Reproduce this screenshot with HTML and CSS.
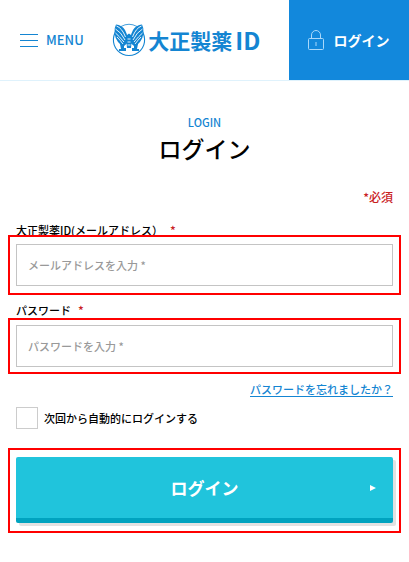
FILE: index.html
```html
<!DOCTYPE html>
<html lang="ja">
<head>
    <meta charset="UTF-8">
    <meta name="viewport" content="width=device-width, initial-scale=1">
    <title>ログイン</title>
    <link rel="stylesheet" href="styles.css">
</head>
<body>
    <header class="header">
        <button type="button" class="menu">
            <span class="menu-icon"></span>
            MENU
        </button>
        <a href="#" class="logo">
            <svg class="logo-mark" viewBox="0 0 34 34" fill="none" stroke="#1485d2" aria-hidden="true">
                <path d="M7 5A15.6 15.6 0 1 0 27 5" stroke-width="1.1"/>
                <path d="M9 3.5Q17 -1 25 3.5" stroke-width=".8"/>
                <g fill="#1485d2" stroke="none">
                    <path d="M4 1.5Q10 2 13 7Q15.500 11 15.500 16V20L12 23Q8 22 6 19Q3 15 2.500 10Q2 5 4 1.500Z"/>
                    <path d="M30 1.500Q24 2 21 7Q18.500 11 18.500 16V20L22 23Q26 22 28 19Q31 15 31.500 10Q32 5 30 1.500Z"/>
                    <path d="M15 12L17 10.500L19 12V16Q20 20 19 25H15Q14 20 15 16Z"/>
                    <path d="M8 21L12 20V25H14V28H7V26H9ZM26 21L22 20V25H20V28H27V26H25Z"/>
                </g>
                <path d="M4.500 3Q10 5 13.500 14M3.500 6Q9 9 13 17M3.500 10Q7 13 12 19M5 14Q8 17 11 21M29.500 3Q24 5 20.500 14M30.500 6Q25 9 21 17M30.500 10Q27 13 22 19M29 14Q26 17 23 21M15.500 16H18.500M15.500 19H18.500M15.500 22H18.500" stroke="#fff" stroke-width=".9"/>
            </svg>
            <span class="logo-text">大正製薬<span class="logo-id">ID</span></span>
        </a>
        <a href="#" class="header-login">
            <svg class="lock" viewBox="0 0 16 20" fill="none" stroke="#a9d8fa" aria-hidden="true">
                <rect x=".5" y="8.5" width="15" height="11" rx="1"/>
                <path d="M3.500 8.500V5a4.500 4.500 0 0 1 9 0v3.500M8 12v4"/>
            </svg>
            ログイン
        </a>
    </header>

    <main class="main">
        <p class="sub-title">LOGIN</p>
        <h1 class="title">ログイン</h1>
        <p class="required-note">*必須</p>

        <form class="form">
            <label class="label" for="email">大正製薬ID(メールアドレス）<span class="required">*</span></label>
            <div class="frame frame-email">
                <input class="input" type="email" id="email" placeholder="メールアドレスを入力 *">
            </div>

            <label class="label label-password" for="password">パスワード<span class="required">*</span></label>
            <div class="frame frame-password">
                <input class="input" type="password" id="password" placeholder="パスワードを入力 *">
            </div>

            <a href="#" class="forgot">パスワードを忘れましたか？</a>

            <div class="remember">
                <input class="checkbox" type="checkbox" id="remember">
                <label for="remember">次回から自動的にログインする</label>
            </div>

            <div class="frame frame-submit">
                <button type="submit" class="submit">ログイン</button>
            </div>
        </form>
    </main>
</body>
</html>
```

FILE: styles.css
```css
* {
    box-sizing: border-box;
}

body {
    margin: 0;
    background: #fff;
    color: #111;
    font-family: "Noto Sans CJK JP", sans-serif;
    font-size: 11px;
    font-weight: 500;
    line-height: 16px;
}

p,
h1 {
    margin: 0;
}

button,
input {
    font: inherit;
}

/* header */
.header {
    display: flex;
    align-items: center;
    justify-content: space-between;
    border-bottom: 1px solid #dff2fc;
}

.menu {
    display: flex;
    align-items: center;
    gap: 8px;
    padding: 0 0 0 20px;
    border: 0;
    background: none;
    color: #1485d2;
    font-size: 13px;
}

.menu-icon {
    width: 18px;
    height: 13px;
    border-top: 1px solid #1485d2;
    border-bottom: 1px solid #1485d2;
    background: linear-gradient(#1485d2, #1485d2) center / 100% 1px no-repeat;
}

.logo {
    display: flex;
    align-items: center;
    gap: 2px;
    color: #1485d2;
    text-decoration: none;
}

.logo-mark {
    width: 34px;
    height: 34px;
}

.logo-text {
    display: flex;
    align-items: center;
    gap: 3px;
    font-size: 21px;
    font-weight: 700;
    line-height: 30px;
}

.logo-id {
    font-size: 24px;
}

.header-login {
    display: flex;
    align-items: center;
    justify-content: center;
    gap: 9px;
    width: 120px;
    height: 80px;
    background: #1288dc;
    color: #fff;
    font-size: 14px;
    font-weight: 700;
    text-decoration: none;
}

.lock {
    width: 16px;
    height: 20px;
}

/* login form */
.main {
    padding: 33px 8px 29px;
}

.sub-title {
    color: #1485d2;
    text-align: center;
}

.title {
    color: #000;
    font-size: 23px;
    font-weight: 500;
    line-height: 36px;
    text-align: center;
}

.required-note {
    margin-top: 23px;
    padding-right: 8px;
    color: #c9211e;
    font-size: 12px;
    text-align: right;
}

.form {
    display: flex;
    flex-direction: column;
    margin-top: 17px;
}

.label {
    height: 13px;
    padding-left: 8px;
    color: #000;
}

.label-password {
    height: 16px;
    margin-top: 7px;
}

.required {
    margin-left: 7px;
    color: #c9211e;
    font-size: 12px;
}

/* red outline around the parts to fill in */
.frame {
    display: flex;
    border: 2px solid #f00;
    background: #fff;
}

.frame-email {
    padding: 7px 6px;
}

.frame-password {
    padding: 5px 6px;
}

.frame-submit {
    margin-top: 19px;
    padding: 7px 6px 8px;
}

.input {
    flex: 1;
    min-width: 0;
    height: 42px;
    padding: 0 11px;
    border: 1px solid #c4c4c4;
    border-radius: 0;
    background: #fff;
    color: #111;
}

.input::placeholder {
    color: #999;
    opacity: 1;
}

.forgot {
    align-self: flex-end;
    margin: 7px 8px 0;
    color: #1485d2;
    text-underline-offset: 2px;
}

.remember {
    display: flex;
    align-items: center;
    gap: 6px;
    margin-top: 10px;
    padding-left: 8px;
    color: #000;
}

.checkbox {
    appearance: none;
    width: 22px;
    height: 22px;
    margin: 0;
    border: 1px solid #ccc;
    background: #fff;
}

.checkbox:checked {
    background: #1485d2;
}

.submit {
    display: grid;
    grid-template-columns: 1fr auto 1fr;
    align-items: center;
    flex: 1;
    height: 66px;
    padding: 0 17px;
    border: 0;
    border-bottom: 5px solid #00a3bf;
    border-radius: 2px;
    background: #20c4dc;
    box-shadow: 3px 3px 0 #e2e2e2;
    color: #fff;
    font-size: 17px;
    font-weight: 700;
}

.submit::before {
    content: "";
}

.submit::after {
    content: "";
    justify-self: end;
    border: 3px solid transparent;
    border-right: 0;
    border-left: 6px solid #fff;
}
```
